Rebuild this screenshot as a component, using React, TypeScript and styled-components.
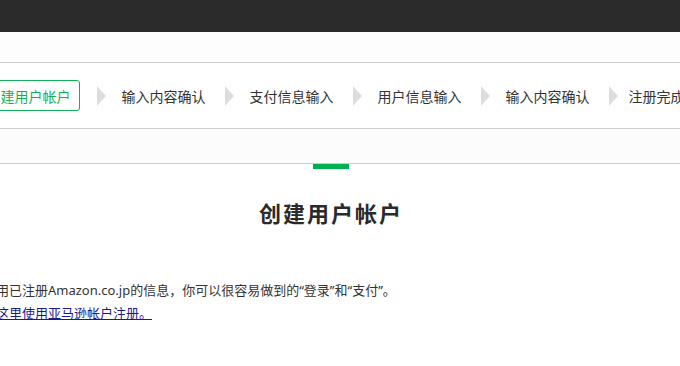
import { Fragment } from "react";
import styled, { createGlobalStyle } from "styled-components";

const GlobalStyle = createGlobalStyle`
  body {
    margin: 0;
    background: #ffffff;
    font-family: "Noto Sans CJK SC", sans-serif;
    color: #333333;
  }
`

const Page = styled.div`
  width: 680px;
  height: 366px;
  overflow: hidden;
`
const TopBar = styled.div`
  height: 32px;
  background-color: #2b2b2b;
`
const SubBar = styled.div`
  height: 30px;
  background-color: #fdfdfd;
  border-bottom: 1px solid #cccccc;
`
// the page is wider than the window; its centre sits at x=331
const Container = styled.div`
  width: 960px;
  margin-left: -149px;
`
const StepsBar = styled.div`
  height: 65px;
  border-bottom: 1px solid #cccccc;
  display: flex;
  flex-direction: row;
  justify-content: center;
  align-items: center;
`
const ActiveStep = styled.div`
  height: 29px;
  padding: 0 8px;
  border: 1px solid #10b05a;
  border-radius: 3px;
  display: flex;
  align-items: center;
  font-size: 14px;
  color: #10b05a;
  white-space: nowrap;
`
const Step = styled.div<{ $last?: boolean }>`
  font-size: 14px;
  color: #333333;
  white-space: nowrap;
  margin-left: ${(p) => (p.$last ? "-5px" : "0")};
`
const Arrow = styled.div<{ $first?: boolean }>`
  width: 0;
  height: 0;
  border-top: 10px solid transparent;
  border-bottom: 10px solid transparent;
  border-left: 9px solid #dddddd;
  margin: 0 16px 0 ${(p) => (p.$first ? "17px" : "19px")};
`
const Band = styled.div`
  height: 34px;
  background-color: #fcfcfc;
  border-bottom: 1px solid #cccccc;
`
const Tab = styled.div`
  width: 36px;
  height: 5px;
  margin: 0 auto;
  background-color: #00b14f;
`
const Title = styled.h1`
  margin: 28px 0 0;
  text-align: center;
  font-size: 22px;
  line-height: 30px;
  font-weight: bold;
  letter-spacing: 2px;
  color: #2a2a2a;
`
const Body = styled.div`
  margin-top: 52px;
  padding-left: 132px;
  font-family: "Noto Sans", "Noto Sans CJK SC", sans-serif;
  font-size: 13px;
  line-height: 23px;
  color: #333333;
`
const Line = styled.p`
  margin: 0;
  white-space: nowrap;
`
const Link = styled.a`
  color: #1a1a8c;
  text-decoration: underline;
`

const steps = ["输入内容确认", "支付信息输入", "用户信息输入", "输入内容确认", "注册完成"];

export default function App() {
  return (
    <Page>
      <GlobalStyle />
      <TopBar />
      <SubBar />
      <Container>
        <StepsBar>
          <ActiveStep>创建用户帐户</ActiveStep>
          {steps.map((s, i) => (
            <Fragment key={i}>
              <Arrow $first={i === 0} />
              <Step $last={i === steps.length - 1}>{s}</Step>
            </Fragment>
          ))}
        </StepsBar>
        <Band />
        <Tab />
        <Title>创建用户帐户</Title>
        <Body>
          <Line>利用已注册Amazon.co.jp的信息，你可以很容易做到的“登录”和“支付”。</Line>
          <Line><Link href="#">从这里使用亚马逊帐户注册。</Link></Line>
        </Body>
      </Container>
    </Page>
  )
}
